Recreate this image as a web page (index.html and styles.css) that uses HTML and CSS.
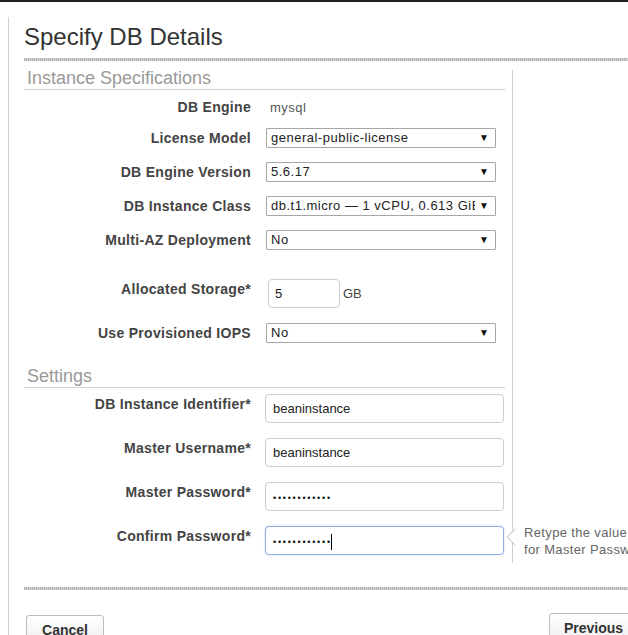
FILE: index.html
```html
<!DOCTYPE html>
<html>
<head>
<meta charset="utf-8">
<title>Specify DB Details</title>
<link rel="stylesheet" href="styles.css">
</head>
<body>
<div class="topbar"></div>
<div class="page">
  <h1 class="title">Specify DB Details</h1>
  <div class="rule"></div>
  <div class="content">
    <div class="main">
      <h2 class="section">Instance Specifications</h2>
      <div class="row r-first"><span class="lbl">DB Engine</span><span class="static">mysql</span></div>
      <div class="row r-tight"><span class="lbl">License Model</span><div class="select"><span class="sel-text">general-public-license</span><span class="caret">▼</span></div></div>
      <div class="row"><span class="lbl">DB Engine Version</span><div class="select"><span class="sel-text">5.6.17</span><span class="caret">▼</span></div></div>
      <div class="row"><span class="lbl">DB Instance Class</span><div class="select"><span class="sel-text">db.t1.micro — 1 vCPU, 0.613 GiB RAM</span><span class="caret">▼</span></div></div>
      <div class="row"><span class="lbl">Multi-AZ Deployment</span><div class="select"><span class="sel-text">No</span><span class="caret">▼</span></div></div>
      <div class="row r-storage"><span class="lbl">Allocated Storage*</span><div class="box small">5</div><span class="unit">GB</span></div>
      <div class="row r-after"><span class="lbl">Use Provisioned IOPS</span><div class="select"><span class="sel-text">No</span><span class="caret">▼</span></div></div>
      <h2 class="section s2">Settings</h2>
      <div class="row field field-first"><span class="lbl">DB Instance Identifier*</span><div class="box">beaninstance</div></div>
      <div class="row field"><span class="lbl">Master Username*</span><div class="box">beaninstance</div></div>
      <div class="row field"><span class="lbl">Master Password*</span><div class="box"><span class="dots">••••••••••••</span></div></div>
      <div class="row field"><span class="lbl">Confirm Password*</span><div class="box focus"><span class="dots">••••••••••••</span><span class="cursor"></span></div></div>
    </div>
    <div class="help">
      <span class="notch"></span>
      <p class="tip">Retype the value entered for Master Password.</p>
    </div>
  </div>
  <div class="rule rule-bottom"></div>
  <div class="footer">
    <button class="btn cancel">Cancel</button>
    <button class="btn prev">Previous</button>
    <button class="btn next">Next Step</button>
  </div>
</div>
</body>
</html>
```

FILE: styles.css
```css
* { box-sizing: border-box; }
html, body { margin: 0; overflow: hidden; background: #fff; }
body {
  font-family: "Liberation Sans", Arial, sans-serif;
  color: #333;
  width: 628px;
  height: 635px;
}
.topbar { height: 2px; background: #222; }
.page {
  margin: 15px 0 0 8px;
  border-left: 1px solid #d0d0d0;
  padding-left: 15px;
  height: 700px;
}
.title {
  margin: 0;
  padding-top: 6px;
  font-size: 24px;
  line-height: 28px;
  font-weight: normal;
  color: #333;
}
.rule {
  margin-top: 7px;
  height: 3px;
  background: repeating-linear-gradient(90deg, #b0b0b0 0 1px, #d8d8d8 1px 2px);
}
.rule-bottom { margin-top: 24px; }
.content { display: flex; margin-top: 7px; }
.main { width: 481px; flex-shrink: 0; padding-bottom: 8px; }
.help {
  position: relative;
  flex: 1;
  min-width: 0;
  margin-left: 7px;
  margin-top: 2px;
  border-left: 1px solid #cfcfcf;
  display: flex;
  flex-direction: column;
  justify-content: flex-end;
  padding: 0 0 5px 11px;
}
.notch {
  position: absolute;
  left: -4px;
  bottom: 20px;
  width: 12px;
  height: 12px;
  background: #fff;
  border-left: 1px solid #cfcfcf;
  border-bottom: 1px solid #cfcfcf;
  transform: rotate(45deg);
}
.tip {
  position: relative;
  margin: 0;
  width: 160px;
  font-size: 13px;
  line-height: 17px;
  color: #666;
  letter-spacing: 0.35px;
}
.section {
  margin: 0;
  padding: 0 0 1px 3px;
  font-size: 18px;
  line-height: 20px;
  font-weight: normal;
  color: #999;
  border-bottom: 1px solid #cfcfcf;
}
.s2 { margin-top: 23px; }
.row { display: flex; align-items: center; margin-top: 14px; height: 20px; }
.r-first { margin-top: 7px; }
.r-tight { margin-top: 11px; }
.r-storage { margin-top: 29px; align-items: flex-start; height: 29px; }
.r-after { margin-top: 15px; }
.field { margin-top: 15px; align-items: flex-start; height: 29px; }
.field-first { margin-top: 6px; }
.lbl {
  width: 227px;
  flex-shrink: 0;
  text-align: right;
  font-size: 14px;
  line-height: 16px;
  font-weight: bold;
  color: #444;
  letter-spacing: 0.3px;
}
.field .lbl, .r-storage .lbl { padding-top: 2px; }
.static {
  margin-left: 19px;
  font-size: 13px;
  color: #555;
  letter-spacing: 0.5px;
}
.select {
  margin-left: 15px;
  width: 230px;
  height: 20px;
  border: 1px solid #a6a6a6;
  border-radius: 1px;
  display: flex;
  align-items: center;
  padding: 0 6px 0 4px;
  background: #fff;
}
.sel-text {
  flex: 1;
  min-width: 0;
  overflow: hidden;
  white-space: nowrap;
  font-size: 13px;
  line-height: 18px;
  color: #222;
  letter-spacing: 0.5px;
}
.caret { font-size: 10px; line-height: 18px; margin-left: 4px; color: #111; }
.box {
  margin-left: 14px;
  width: 239px;
  height: 29px;
  border: 1px solid #ccc;
  border-radius: 4px;
  padding: 0 7px;
  font-size: 13px;
  color: #222;
  display: flex;
  align-items: center;
  background: #fff;
}
.box.small { margin-left: 17px; width: 72px; padding-left: 6px; }
.box.focus {
  border-color: #8fb2e2;
  box-shadow: 0 0 2px rgba(110, 155, 220, 0.45);
}
.unit { margin-left: 3px; font-size: 13px; color: #444; align-self: center; }
.dots { font-size: 9px; letter-spacing: 1.75px; padding-top: 3px; color: #111; }
.cursor { display: inline-block; width: 1px; height: 16px; background: #000; margin-left: -1px; margin-top: 2px; }
.footer { display: flex; align-items: flex-start; margin-top: 23px; }
.btn {
  flex-shrink: 0;
  font-family: "Liberation Sans", Arial, sans-serif;
  font-size: 14px;
  font-weight: bold;
  line-height: 16px;
  color: #333;
  padding: 6px 15px 10px;
  border: 1px solid #bdbdbd;
  border-radius: 3px;
  background: linear-gradient(#ffffff, #ececec);
  white-space: nowrap;
}
.cancel { margin-left: 2px; margin-top: 2px; width: 78px; }
.prev { margin-left: 445px; padding: 6px 14px 10px; }
.next { margin-left: 8px; }
```
